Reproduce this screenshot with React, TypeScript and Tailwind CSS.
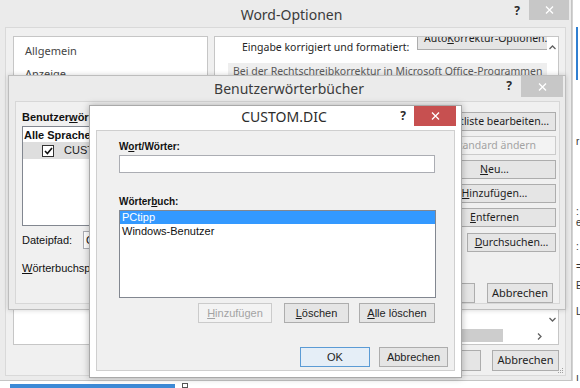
import React from "react";

const SEG = "font-['Noto_Sans',sans-serif]";
const TAH = "font-['Liberation_Sans',Arial,sans-serif]";

function XIcon() {
  return (
    <svg width="9" height="8" viewBox="0 0 9 8">
      <path d="M1 0.5L8 7.5M8 0.5L1 7.5" stroke="#ffffff" strokeWidth="1.3" />
    </svg>
  );
}

function Q({ className }: { className: string }) {
  return (
    <span className={`${SEG} text-[12px] font-bold leading-[14px] text-[#2b2b2b] ${className}`}>?</span>
  );
}

function Btn({
  children,
  className,
  kind = "n",
}: {
  children: React.ReactNode;
  className: string;
  kind?: "n" | "d" | "def";
}) {
  const k =
    kind === "d"
      ? "border-[#cbcbcb] bg-[#f3f3f3] text-[#a3a3a3]"
      : kind === "def"
      ? "border-[#5b9bd5] bg-[#e5eef7] text-[#1e1e1e]"
      : "border-[#adadad] bg-[#e5e5e5] text-[#1e1e1e]";
  return (
    <div
      className={`flex shrink-0 items-center justify-center overflow-hidden whitespace-nowrap border ${k} ${className}`}
    >
      {children}
    </div>
  );
}

function U({ children }: { children: React.ReactNode }) {
  return <span className="underline underline-offset-[1px]">{children}</span>;
}

function ChevUp() {
  return (
    <svg width="7" height="5" viewBox="0 0 7 5">
      <path d="M0.5 4L3.5 1L6.5 4" fill="none" stroke="#606060" strokeWidth="1.3" />
    </svg>
  );
}
function ChevDown() {
  return (
    <svg width="7" height="5" viewBox="0 0 7 5">
      <path d="M0.5 1L3.5 4L6.5 1" fill="none" stroke="#606060" strokeWidth="1.3" />
    </svg>
  );
}
function ChevRight() {
  return (
    <svg width="5" height="7" viewBox="0 0 5 7">
      <path d="M1 0.5L4 3.5L1 6.5" fill="none" stroke="#606060" strokeWidth="1.3" />
    </svg>
  );
}

function Checkbox() {
  return (
    <div className="flex h-[12px] w-[12px] shrink-0 items-center justify-center border border-[#333333] bg-white">
      <svg width="9" height="8" viewBox="0 0 9 8">
        <path d="M1 4L3.4 6.5L8 1" fill="none" stroke="#111111" strokeWidth="1.6" />
      </svg>
    </div>
  );
}

const navItems = [
  "Allgemein",
  "Anzeige",
  "Dokumentprüfung",
  "Speichern",
  "Sprache",
  "Erweitert",
  "Menüband anpassen",
  "Symbolleiste für den Schnellzugriff",
  "Add-Ins",
  "Trust Center",
];

function WordOptions() {
  return (
    <div className="flex h-[381px] w-[572px] shrink-0 flex-col border-r border-b border-[#c4c4c4] bg-[#ebebeb]">
      {/* title bar */}
      <div className="flex h-[27px] shrink-0 items-start">
        <div className="flex-1" />
        <div className={`${SEG} pl-[12px] pt-[5px] text-[14px] leading-[20px] text-[#3b3b3b]`}>Word-Optionen</div>
        <div className="flex flex-1 items-start justify-end">
          <Q className="mr-[9px] mt-[4px]" />
          <div className="mr-[2px] flex h-[20px] w-[40px] items-center justify-center bg-[#c7c7c7]">
            <XIcon />
          </div>
        </div>
      </div>
      {/* client */}
      <div className="relative mx-[5px] mb-[4px] flex flex-1 flex-col border border-[#d9d9d9] bg-[#f0f0f0] pl-[7px] pr-[6px] pt-[8px]">
        <div className="flex gap-[6px]">
          <div className="h-[309px] w-[195px] shrink-0 border border-[#c6c6c6] bg-white pt-[2px]">
            {navItems.map((t) => (
              <div key={t} className={`${SEG} h-[23px] pl-[11px] text-[11px] leading-[23px] text-[#444444]`}>
                {t}
              </div>
            ))}
          </div>
          <div className="flex h-[309px] w-[345px] flex-col border border-[#c6c6c6] bg-white">
            <div className="flex min-h-0 flex-1">
              <div className="min-w-0 flex-1 overflow-hidden">
                <div className="-mt-[9px] flex w-[345px]">
                  <div className={`${SEG} ml-[27px] mt-[12px] w-[175px] shrink-0 whitespace-nowrap text-[10.5px] leading-[14px] text-[#262626]`}>
                    Eingabe korrigiert und formatiert:
                  </div>
                  <Btn className={`${SEG} h-[22px] w-[143px] text-[10.5px]`}>
                    Auto<U>K</U>orrektur-Optionen...
                  </Btn>
                </div>
                <div className={`${SEG} ml-[13px] mt-[9px] h-[16px] w-[330px] whitespace-nowrap bg-[#eeeeee] pl-[5px] text-[10.5px] leading-[16px] text-[#5a5a5a]`}>
                  Bei der Rechtschreibkorrektur in Microsoft Office-Programmen
                </div>
              </div>
              <div className="flex w-[11px] flex-col items-center justify-between bg-white">
                <div className="flex h-[20px] items-center">
                  <ChevUp />
                </div>
                <div className="flex h-[20px] items-center pt-[3px]">
                  <ChevDown />
                </div>
              </div>
            </div>
            <div className="flex h-[16px] shrink-0">
              <div className="w-[15px]" />
              <div className="ml-[3px] mt-[1px] h-[13px] w-[270px] bg-[#cdcdcd]" />
              <div className="flex-1" />
              <div className="flex w-[15px] items-center justify-center">
                <ChevRight />
              </div>
              <div className="w-[11px]" />
            </div>
          </div>
        </div>
        <div className="mt-[5px] flex justify-end gap-[11px]">
          <Btn className={`${SEG} h-[21px] w-[64px] text-[10.5px]`}>OK</Btn>
          <Btn className={`${SEG} h-[21px] w-[67px] text-[11px]`}>Abbrechen</Btn>
        </div>
        <svg className="absolute bottom-[1px] right-[1px]" width="7" height="7" viewBox="0 0 7 7">
          <rect x="5" y="1" width="1" height="1" fill="#a0a0a0" />
          <rect x="3" y="3" width="1" height="1" fill="#a0a0a0" />
          <rect x="5" y="3" width="1" height="1" fill="#a0a0a0" />
          <rect x="1" y="5" width="1" height="1" fill="#a0a0a0" />
          <rect x="3" y="5" width="1" height="1" fill="#a0a0a0" />
          <rect x="5" y="5" width="1" height="1" fill="#a0a0a0" />
        </svg>
      </div>
    </div>
  );
}

function Benutzer() {
  const rb = `${SEG} h-[19px] w-[123px] text-[10.5px]`;
  return (
    <div className="absolute left-[8px] top-[75px] flex h-[235px] w-[558px] flex-col border border-[#bdbdbd] bg-[#ebebeb] shadow-[0_0_5px_rgba(0,0,0,0.18)]">
      <div className="flex h-[25px] shrink-0 items-start">
        <div className="flex-1" />
        <div className={`${SEG} pl-[4px] pt-[3px] text-[14px] leading-[20px] text-[#3b3b3b]`}>Benutzerwörterbücher</div>
        <div className="flex flex-1 items-start justify-end">
          <Q className="mr-[9px] mt-[3px]" />
          <div className="mr-[2px] flex h-[21px] w-[42px] items-center justify-center bg-[#c7c7c7]">
            <XIcon />
          </div>
        </div>
      </div>
      <div className="mb-[6px] ml-[6px] mr-[5px] flex flex-1 flex-col border border-[#d7d7d7] bg-[#f0f0f0] pl-[6px] pr-[3px] pt-[9px]">
        <div className="flex gap-[8px]">
          <div className="min-w-0 flex-1">
            <div className={`${TAH} h-[12px] text-[11px] font-bold leading-[12px] text-[#111111]`}>
              Benutzer<U>w</U>örterbücher:
            </div>
            <div className="mt-[3px] h-[100px] border border-[#828790] bg-white">
              <div className={`${TAH} pl-[1px] pt-[2px] text-[11px] font-bold leading-[13px] text-[#111111]`}>
                Alle Sprachen:
              </div>
              <div className="flex h-[17px] items-center bg-[#dedede] pl-[19px]">
                <Checkbox />
                <span className={`${TAH} ml-[10px] text-[11px] leading-[13px] text-[#222222]`}>CUSTOM.DIC</span>
              </div>
            </div>
          </div>
          <div className="flex w-[123px] shrink-0 flex-col gap-[5px] pt-[1px]">
            <Btn className={rb}>Wortliste bearbeiten...</Btn>
            <Btn className={rb} kind="d">
              Standard ändern
            </Btn>
            <Btn className={rb}>
              <U>N</U>eu...
            </Btn>
            <Btn className={rb}>
              <U>H</U>inzufügen...
            </Btn>
            <Btn className={rb}>
              <U>E</U>ntfernen
            </Btn>
          </div>
        </div>
        <div className="mt-[4px] flex items-start">
          <div className={`${TAH} w-[61px] shrink-0 pt-[2px] text-[11px] leading-[14px] text-[#111111]`}>Dateipfad:</div>
          <div className={`${TAH} h-[18px] min-w-0 flex-1 overflow-hidden whitespace-nowrap border border-[#abadb3] bg-white pl-[2px] text-[11px] leading-[16px] text-[#111111]`}>
            C:\Users\PCtipp\AppData\Roaming\Microsoft\UProof\CUSTOM.DIC
          </div>
          <Btn className={`${SEG} ml-[12px] mt-[2px] h-[19px] w-[89px] text-[10.5px]`}>
            <U>D</U>urchsuchen...
          </Btn>
        </div>
        <div className="mt-[7px] flex items-center">
          <div className={`${TAH} text-[11px] leading-[12px] text-[#111111]`}>
            <U>W</U>örterbuchsprache:
          </div>
          <div className={`${TAH} ml-[8px] h-[18px] w-[200px] border border-[#acacac] bg-[#e5e5e5] pl-[3px] text-[11px] leading-[16px]`}>
            Alle Sprachen:
          </div>
        </div>
        <div className="mr-[3px] mt-[6px] flex justify-end gap-[12px]">
          <Btn className={`${SEG} h-[20px] w-[70px] text-[10.5px]`}>OK</Btn>
          <Btn className={`${SEG} h-[20px] w-[66px] text-[11px]`}>Abbrechen</Btn>
        </div>
      </div>
    </div>
  );
}

function CustomDic() {
  const tb = `${TAH} h-[20px] text-[11px]`;
  return (
    <div className="absolute left-[89px] top-[105px] flex h-[273px] w-[373px] flex-col border border-[#a9a9a9] bg-white shadow-[0_0_7px_rgba(0,0,0,0.28)]">
      <div className="flex h-[24px] shrink-0 items-start">
        <div className="flex-1" />
        <div className={`${SEG} pl-[17px] pt-[1px] text-[14px] leading-[20px] text-[#2b2b2b]`}>CUSTOM.DIC</div>
        <div className="flex flex-1 items-start justify-end">
          <Q className="mr-[8px] mt-[3px]" />
          <div className="mr-[5px] flex h-[20px] w-[42px] items-center justify-center bg-[#c75050]">
            <XIcon />
          </div>
        </div>
      </div>
      <div className="mx-[6px] mb-[6px] flex flex-1 flex-col border border-[#cfcfcf] bg-[#f0f0f0] pl-[22px] pt-[10px]">
        <div className={`${TAH} h-[12px] text-[10px] font-bold leading-[12px] text-[#111111]`}>
          W<U>o</U>rt/Wörter:
        </div>
        <div className="mr-[19px] mt-[2px] h-[18px] border border-[#abadb3] bg-white" />
        <div className={`${TAH} mt-[23px] h-[12px] text-[10px] font-bold leading-[12px] text-[#111111]`}>
          Wörter<U>b</U>uch:
        </div>
        <div className="mr-[18px] mt-[2px] h-[88px] border border-[#828790] bg-white">
          <div className={`${TAH} h-[13px] bg-[#3399ff] pl-[2px] text-[11px] leading-[13px] text-white`}>PCtipp</div>
          <div className={`${TAH} h-[14px] pl-[2px] text-[11px] leading-[14px] text-[#111111]`}>Windows-Benutzer</div>
        </div>
        <div className="mr-[19px] mt-[5px] flex justify-end">
          <Btn className={`${tb} w-[74px]`} kind="d">
            <U>H</U>inzufügen
          </Btn>
          <Btn className={`${tb} ml-[12px] w-[65px]`}>
            <U>L</U>öschen
          </Btn>
          <Btn className={`${tb} ml-[10px] w-[76px]`}>
            <U>A</U>lle löschen
          </Btn>
        </div>
        <div className="mr-[6px] mt-[24px] flex justify-end gap-[9px]">
          <Btn className={`${tb} w-[70px]`} kind="def">
            OK
          </Btn>
          <Btn className={`${tb} w-[69px]`}>Abbrechen</Btn>
        </div>
      </div>
    </div>
  );
}

function RightStrip() {
  const c = `${TAH} ml-[3px] h-[10px] text-[10px] leading-[10px] text-[#333333]`;
  return (
    <div className="flex h-[381px] w-[8px] shrink-0 flex-col overflow-hidden border-l border-[#d3d3d3] bg-white">
      <div className="ml-[3px] mt-[27px] h-[53px] w-[2px] shrink-0 bg-[#2f7fd1]" />
      <div className={`${c} mt-[57px]`}>r</div>
      <div className={`${c} mt-[60px]`}>:</div>
      <div className={`${c} mt-[1px]`}>e</div>
      <div className={`${c} mt-[14px]`}>:</div>
      <div className={`${c} mt-[10px]`}>=</div>
      <div className={`${c} mt-[9px]`}>E</div>
      <div className={`${c} mt-[16px]`}>L</div>
      <div className={`${c} mt-[58px]`}>I</div>
    </div>
  );
}

export default function App() {
  return (
    <div className="relative h-[388px] w-[580px] overflow-hidden bg-white">
      <div className="flex flex-col">
        <div className="flex">
          <WordOptions />
          <RightStrip />
        </div>
        <div className="flex h-[7px] items-end bg-white">
          <div className="ml-[10px] h-[4px] w-[165px] bg-[#3d8ad6]" />
          <div className="ml-[7px] h-[5px] w-[6px] border border-[#555555]" />
        </div>
      </div>
      <Benutzer />
      <CustomDic />
    </div>
  );
}
